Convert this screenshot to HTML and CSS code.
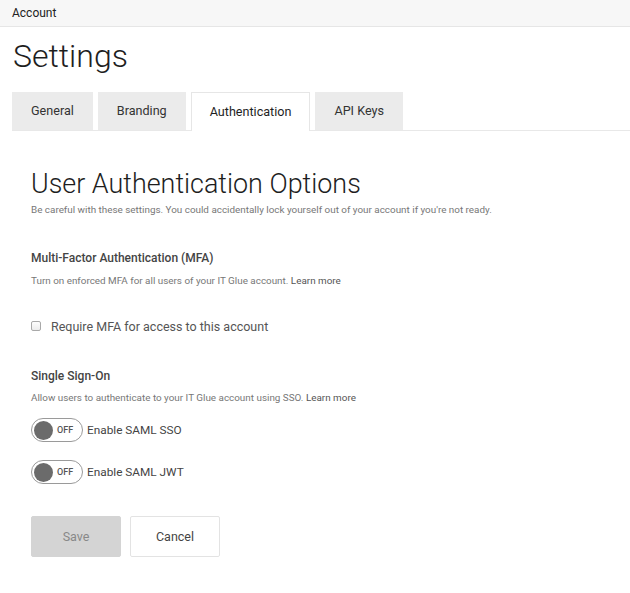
FILE: index.html
```html
<!DOCTYPE html>
<html>
<head>
<meta charset="utf-8">
<link rel="stylesheet" href="styles.css">
</head>
<body>
<div class="topbar">Account</div>
<div class="page">
  <h1 class="title">Settings</h1>
  <div class="tabs">
    <div class="tab">General</div>
    <div class="tab">Branding</div>
    <div class="tab active">Authentication</div>
    <div class="tab">API Keys</div>
  </div>
  <div class="panel">
    <h2 class="heading">User Authentication Options</h2>
    <p class="subtitle">Be careful with these settings. You could accidentally lock yourself out of your account if you're not ready.</p>

    <h3 class="section-title mfa">Multi-Factor Authentication (MFA)</h3>
    <p class="desc">Turn on enforced MFA for all users of your IT Glue account. <a class="learn">Learn more</a></p>
    <label class="check-row"><input type="checkbox" class="check"><span>Require MFA for access to this account</span></label>

    <h3 class="section-title sso">Single Sign-On</h3>
    <p class="desc">Allow users to authenticate to your IT Glue account using SSO. <a class="learn">Learn more</a></p>
    <div class="toggle-row first">
      <span class="toggle"><span class="knob"></span><span class="off">OFF</span></span>
      <span class="toggle-label">Enable SAML SSO</span>
    </div>
    <div class="toggle-row second">
      <span class="toggle"><span class="knob"></span><span class="off">OFF</span></span>
      <span class="toggle-label">Enable SAML JWT</span>
    </div>

    <div class="actions">
      <button class="btn save">Save</button>
      <button class="btn cancel">Cancel</button>
    </div>
  </div>
</div>
</body>
</html>
```
FILE: styles.css
```css
html, body {
  margin: 0;
  padding: 0;
  background: #fff;
  font-family: Roboto, "Liberation Sans", sans-serif;
  color: #444;
}
.topbar {
  height: 26px;
  line-height: 26px;
  background: #f7f7f7;
  border-bottom: 1px solid #e6e6e6;
  padding-left: 12px;
  font-size: 12px;
  color: #222;
}
.page {
  padding-left: 12px;
}
.title {
  margin: 10px 0 0 1px;
  font-size: 32px;
  line-height: 38px;
  font-weight: 300;
  color: #1e1e1e;
}
.tabs {
  display: flex;
  margin-top: 17px;
  border-bottom: 1px solid #e8e8e8;
  height: 38px;
}
.tab {
  box-sizing: border-box;
  height: 38px;
  line-height: 38px;
  padding: 0 19px;
  margin-right: 5px;
  background: #ebebeb;
  font-size: 12.6px;
  color: #333;
}
.tab.active {
  background: #fff;
  border: 1px solid #e6e6e6;
  border-bottom: none;
  height: 39px;
  line-height: 37px;
  padding: 0 18px;
  margin-right: 5px;
  color: #1e1e1e;
}
.panel {
  padding-left: 19px;
}
.heading {
  margin: 38px 0 0 0;
  font-size: 26.9px;
  line-height: 30px;
  font-weight: 300;
  color: #1e1e1e;
}
.subtitle {
  margin: 4px 0 0 0;
  font-size: 9.9px;
  line-height: 14px;
  color: #777;
}
.section-title {
  font-size: 12px;
  line-height: 16px;
  font-weight: 500;
  color: #444;
  margin: 0;
}
.section-title.mfa { margin-top: 33px; }
.section-title.sso { margin-top: 32px; }
.desc {
  margin: 8px 0 0 0;
  font-size: 9.9px;
  line-height: 14px;
  color: #777;
}
.section-title.sso + .desc { margin-top: 7px; }
.learn {
  color: #555;
}
.check-row {
  display: flex;
  align-items: center;
  height: 20px;
  margin-top: 28px;
  font-size: 12.5px;
  color: #555;
}
.check {
  appearance: none;
  -webkit-appearance: none;
  box-sizing: border-box;
  width: 10px;
  height: 10px;
  margin: 0 10px 0 0;
  border: 1px solid #a9a9a9;
  border-radius: 2px;
  background: linear-gradient(#fdfdfd, #ececec);
}
.toggle-row {
  display: flex;
  align-items: center;
  height: 24px;
}
.toggle-row.first { margin-top: 13px; }
.toggle-row.second { margin-top: 18px; }
.toggle {
  box-sizing: border-box;
  display: flex;
  align-items: center;
  width: 52px;
  height: 24px;
  border: 1px solid #9a9a9a;
  border-radius: 12px;
  padding-left: 2px;
}
.knob {
  width: 19px;
  height: 19px;
  border-radius: 50%;
  background: #6b6b6b;
}
.off {
  margin-left: 4px;
  font-size: 9px;
  font-weight: 500;
  color: #555;
}
.toggle-label {
  margin-left: 4px;
  font-size: 11.8px;
  color: #444;
}
.actions {
  display: flex;
  gap: 9px;
  margin-top: 32px;
}
.btn {
  box-sizing: border-box;
  width: 90px;
  height: 41px;
  border-radius: 2px;
  font-family: Roboto, "Liberation Sans", sans-serif;
  font-size: 12.5px;
  padding: 0;
}
.btn.save {
  background: #d4d4d4;
  border: 1px solid #d4d4d4;
  color: #888;
}
.btn.cancel {
  background: #fff;
  border: 1px solid #e3e3e3;
  color: #444;
}
```
